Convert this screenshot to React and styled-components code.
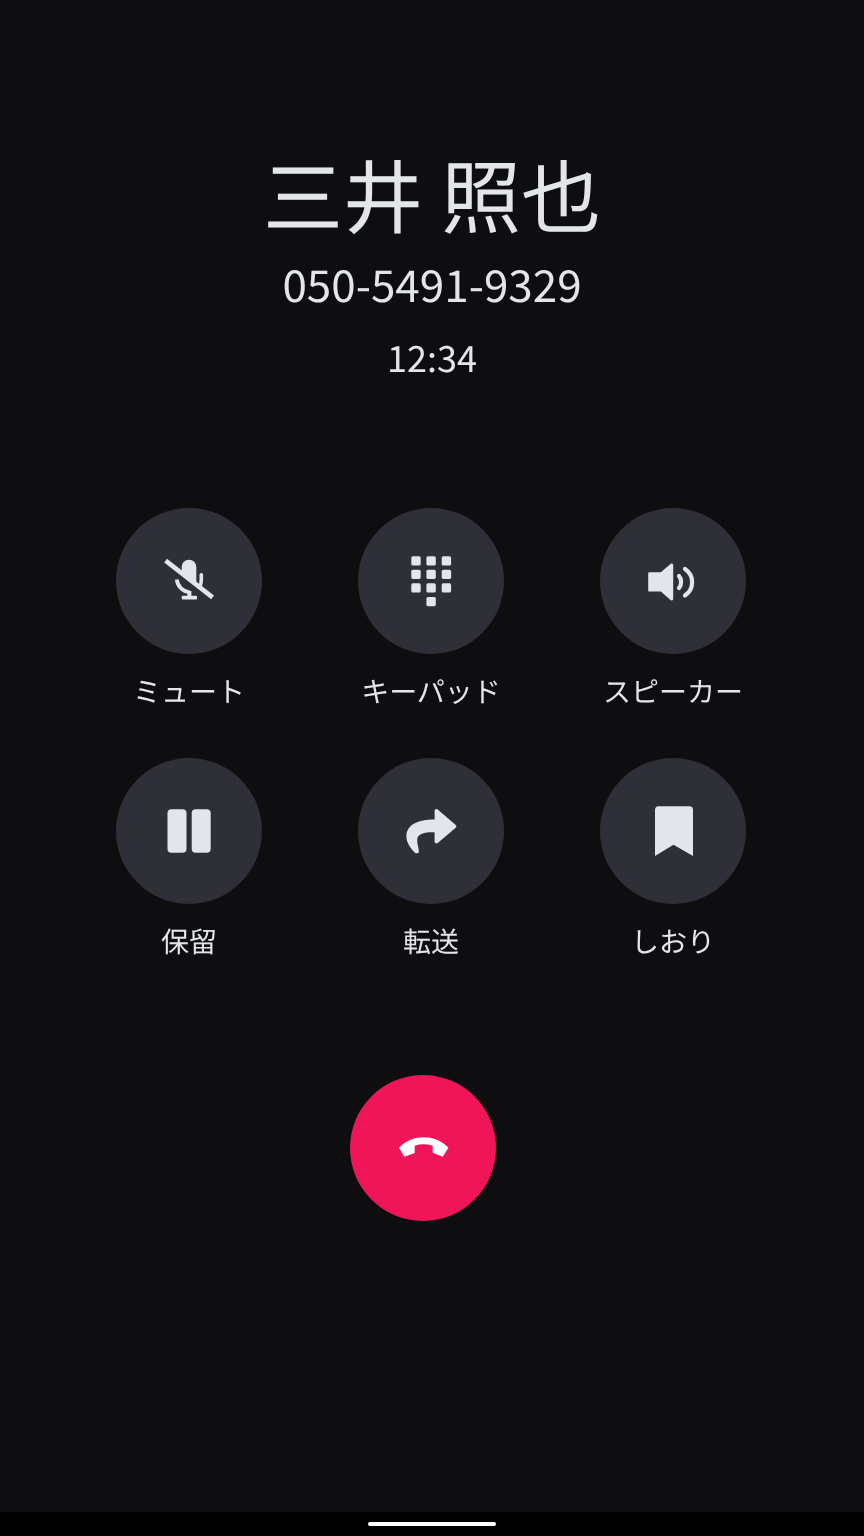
import React from "react";
import styled, { createGlobalStyle } from "styled-components";

const GlobalStyle = createGlobalStyle`
  html, body {
    margin: 0;
    padding: 0;
    background: #0e0e11;
  }
`;

const MuteIcon = () => (
  <IconSvg viewBox="43 43 60 60">
    <path d="M65.700 59a7.300 7.300 0 0 1 14.600 0v18.200L65.700 65.800z" />
    <path d="M84 78.500c.9-2.200 1.300-4.600 1.300-7.200v-4.600" fill="none" stroke="currentColor" strokeWidth="3.600" strokeLinecap="round" />
    <path d="M60.800 71.500c.8 6.400 5.400 11.400 13 13" fill="none" stroke="currentColor" strokeWidth="3.800" />
    <path d="M73.400 83v6" fill="none" stroke="currentColor" strokeWidth="4" />
    <rect x="65.700" y="87.800" width="15.300" height="3.700" rx="1" />
    <path d="M49.600 52.600l47 36.800" fill="none" stroke="currentColor" strokeWidth="4.600" />
  </IconSvg>
);

const KeypadIcon = () => (
  <IconSvg viewBox="43 43 60 60">
    {[53.3, 68.4, 83.7].map((x) =>
      [48.3, 61.7, 75.3].map((y) => <rect key={`${x}-${y}`} x={x} y={y} width="9.4" height="9.2" rx="1.6" />)
    )}
    <rect x="68.4" y="89" width="9.4" height="9.2" rx="1.6" />
  </IconSvg>
);

const SpeakerIcon = () => (
  <IconSvg viewBox="43 43 60 60">
    <path d="M48.200 65.500c0-.7.500-1.200 1.200-1.200h11.500l9.600-8.400c1-.9 2.700-.2 2.700 1.100v33.900c0 1.300-1.700 2-2.700 1.100l-9.600-8.400H49.400c-.7 0-1.200-.5-1.200-1.200z" />
    <path d="M79 68c2.800 3 2.800 9 0 12" fill="none" stroke="currentColor" strokeWidth="4.200" strokeLinecap="round" />
    <path d="M85 61c9.500 6.400 9.500 20 0 26.500" fill="none" stroke="currentColor" strokeWidth="4.200" strokeLinecap="round" />
  </IconSvg>
);

const PauseIcon = () => (
  <IconSvg viewBox="43 43 60 60">
    <rect x="51.5" y="51.2" width="19" height="43.6" rx="4" />
    <rect x="75.7" y="51.2" width="19" height="43.6" rx="4" />
  </IconSvg>
);

const ForwardIcon = () => (
  <IconSvg viewBox="43 43 60 60">
    <path d="M76.600 53c0-1.700 1.900-2.500 3.100-1.400l18 15.400c.9.800.9 2 0 2.800l-18 15.200c-1.200 1.100-3.100.2-3.100-1.400V74.400c-7.500-.2-17.600.3-17.400 7.800.1 3.800 1.300 7.200 1.700 10.700.3 2.300-2.400 3.200-3.900 1.800-4.500-4.400-8.600-10.300-8.600-16.200 0-11.900 11.800-16.900 28.200-16.900z" />
  </IconSvg>
);

const BookmarkIcon = () => (
  <IconSvg viewBox="43 43 60 60">
    <path d="M55 51.600c0-1.600 1.300-3.400 3.400-3.400h31.200c2.100 0 3.400 1.800 3.400 3.400v46.300L73.500 86.700 55 97.900z" />
  </IconSvg>
);

const HangupIcon = () => (
  <IconSvg viewBox="43 43 60 60">
    <path d="M49 72.700c6.500-6.600 15-10.400 24.700-10.400s18.200 3.800 24.700 10.400L92.700 81.700l-10-3.900v-7.100c-5.800-1.900-12.200-1.900-18 0v7.400l-10.300 3.600z" />
  </IconSvg>
);

const CONTROLS = [
  { label: "ミュート", icon: <MuteIcon /> },
  { label: "キーパッド", icon: <KeypadIcon /> },
  { label: "スピーカー", icon: <SpeakerIcon /> },
  { label: "保留", icon: <PauseIcon /> },
  { label: "転送", icon: <ForwardIcon /> },
  { label: "しおり", icon: <BookmarkIcon /> },
];

const App = () => {
  return (
    <Screen>
      <GlobalStyle />
      <Main>
        <Caller>
          <Name>三井 照也</Name>
          <Phone>050-5491-9329</Phone>
          <Timer>12:34</Timer>
        </Caller>
        <Controls>
          {CONTROLS.map((control) => (
            <Control key={control.label}>
              <RoundButton>{control.icon}</RoundButton>
              <Label>{control.label}</Label>
            </Control>
          ))}
        </Controls>
        <EndRow>
          <EndButton>
            <HangupIcon />
          </EndButton>
        </EndRow>
      </Main>
      <NavBar>
        <HomePill />
      </NavBar>
    </Screen>
  );
};

const Screen = styled.div`
  width: 864px;
  height: 1536px;
  display: flex;
  flex-direction: column;
  background: #0e0e11;
  color: #e2e5e9;
  font-family: "Noto Sans CJK JP", "Noto Sans", sans-serif;
  text-rendering: geometricPrecision;
  overflow: hidden;
`;

const Main = styled.main`
  flex: 1;
  display: flex;
  flex-direction: column;
  will-change: transform;
`;

const Caller = styled.section`
  padding-top: 141px;
  display: flex;
  flex-direction: column;
  align-items: center;
`;

const Name = styled.h1`
  margin: 0;
  font-size: 80px;
  font-weight: 400;
  line-height: 104px;
`;

const Phone = styled.div`
  margin-top: 6px;
  font-size: 44px;
  font-weight: 400;
  line-height: 64px;
`;

const Timer = styled.div`
  margin-top: 10px;
  font-size: 36px;
  font-weight: 400;
  line-height: 64px;
`;

const Controls = styled.section`
  margin-top: 119px;
  padding-left: 116px;
  display: grid;
  grid-template-columns: repeat(3, 146px);
  column-gap: 96px;
  row-gap: 46px;
`;

const Control = styled.div`
  display: flex;
  flex-direction: column;
  align-items: center;
`;

const RoundButton = styled.button`
  width: 146px;
  height: 146px;
  padding: 0;
  border: none;
  border-radius: 50%;
  background: #2f3037;
  color: #e2e5e9;
  display: flex;
  align-items: center;
  justify-content: center;
`;

const EndButton = styled(RoundButton)`
  background: #f01458;
  color: #fff;
`;

const IconSvg = styled.svg`
  width: 60px;
  height: 60px;
  fill: currentColor;
`;

const Label = styled.div`
  margin-top: 16px;
  width: 200px;
  text-align: center;
  font-size: 28px;
  font-weight: 400;
  line-height: 42px;
  white-space: nowrap;
`;

const EndRow = styled.div`
  margin-top: 113px;
  padding-left: 350px;
  display: flex;
`;

const NavBar = styled.nav`
  height: 24px;
  background: #000;
  display: flex;
  justify-content: center;
  padding-top: 10px;
  box-sizing: border-box;
`;

const HomePill = styled.div`
  width: 128px;
  height: 4px;
  border-radius: 2px;
  background: #fff;
`;

export default App;
